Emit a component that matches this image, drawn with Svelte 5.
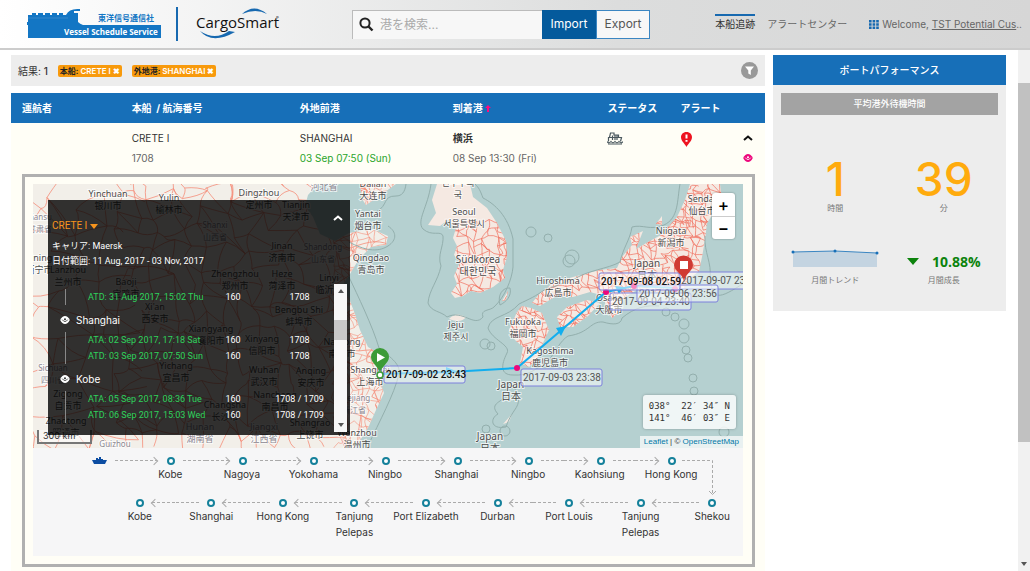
<script lang="ts">
  type PortCall = { port: string; events: { text: string; service: string; voyage: string }[] };
  type Label = { x: number; y: number; lines: string[]; size?: number; soft?: boolean };

  let query = $state("");
  let mode = $state("Import");

  const filters = [
    { key: "本船:", value: "CRETE I" },
    { key: "外地港:", value: "SHANGHAI" },
  ];

  const calls: PortCall[] = [
    { port: "", events: [{ text: "ATD: 31 Aug 2017, 15:02 Thu", service: "160", voyage: "1708" }] },
    {
      port: "Shanghai",
      events: [
        { text: "ATA: 02 Sep 2017, 17:18 Sat", service: "160", voyage: "1708" },
        { text: "ATD: 03 Sep 2017, 07:50 Sun", service: "160", voyage: "1708" },
      ],
    },
    {
      port: "Kobe",
      events: [
        { text: "ATA: 05 Sep 2017, 08:36 Tue", service: "160", voyage: "1708 / 1709" },
        { text: "ATD: 06 Sep 2017, 15:03 Wed", service: "160", voyage: "1708 / 1709" },
      ],
    },
  ];

  const outbound = ["", "Kobe", "Nagoya", "Yokohama", "Ningbo", "Shanghai", "Ningbo", "Kaohsiung", "Hong Kong"];
  const inbound = ["Kobe", "Shanghai", "Hong Kong", "Tanjung Pelepas", "Port Elizabeth", "Durban", "Port Louis", "Tanjung Pelepas", "Shekou"];

  const china =
    "M33 184H318L308 195 305 206 313 217 320 234 335 241 349 233 360 231 372 229 388 236 386 245 371 247 359 259 350 274 342 286 350 301 355 314 360 330 368 347 378 353 384 368 381 384 384 393 376 410 368 428 355 448H33ZM360 184H396L378 197 366 205 362 199Z";
  const islands = [
    "M437 184 432 200 436 213 428 225 440 226 448 220 456 228 453 238 457 246 454 255 460 262 454 276 457 284 451 293 455 298 463 296 471 291 480 293 493 287 505 278 503 270 507 257 506 241 497 223 487 208 473 197 470 184Z",
    "M449 319Q456 311 466 317Q461 324 449 319Z",
    "M517 312 522 306 531 308 542 313 549 330 543 343 538 358 529 367 520 363 523 347 515 340 509 330Z",
    "M532 303 540 293 553 283 573 277 600 270 617 268 622 257 632 245 630 237 643 231 636 249 648 242 661 235 677 217 685 200 690 184H720L722 200 707 223 705 240 702 257 699 271 688 280 684 289 676 285 660 292 637 290 625 297 618 313 612 318 606 309 604 296 590 292 573 297 556 296 540 306Z",
    "M557 317 567 307 587 300 600 303 588 316 573 327 560 327Z",
    "M656 224 662 216 662 225Z",
    "M502 301 508 291 506 300Z",
    "M503 424 512 414 509 422Z",
    "M376 392 381 391 379 396Z",
  ].join("");

  const seaLines = [
    "M406 184C405 192 402 196 396 196C382 196 389 205 376 212M349 242C364 250 377 253 388 246C397 240 397 232 388 226",
    "M349 277C357 294 373 327 379 348C396 361 400 366 399 374C394 395 380 420 367 448",
    "M431 184C428 207 416 221 423 229C432 237 441 230 443 236C444 246 437 255 441 266C438 281 429 290 428 303C431 312 441 311 447 317C463 309 474 328 483 317C480 309 490 311 494 307C505 297 512 279 513 267V239C508 216 495 204 483 198C480 190 479 188 475 184",
    "M500 305C497 295 503 287 510 288C512 296 506 302 500 305Z",
    "M744 283C718 300 713 300 710 279C712 262 704 253 705 236",
    "M680 184C677 200 679 218 664 225C650 231 643 224 632 227C630 240 623 248 620 262C608 269 587 270 573 280C562 282 557 287 547 288C535 297 529 299 519 304C507 318 491 315 488 328C492 340 511 345 507 353C501 365 500 375 513 375C528 376 535 370 548 361C557 350 560 341 568 336C590 333 590 321 603 322C613 325 621 325 622 318C635 307 647 305 659 306",
    "M498 414C488 403 503 402 508 394C500 377 513 384 516 391C523 408 513 406 506 427C490 430 490 418 498 414Z",
  ];
  const rings = [
    [531, 232, 5], [548, 238, 4], [569, 261, 6], [572, 257, 7], [485, 344, 5], [491, 346, 4],
    [684, 324, 5], [684, 338, 5], [686, 350, 4], [688, 358, 4], [693, 378, 4], [694, 391, 4],
    [724, 432, 5], [486, 429, 4], [505, 431, 5], [666, 312, 4], [675, 317, 4],
  ];

  const labels: Label[] = [
    { x: 108, y: 197, lines: ["Yinchuan", "银川市"] },
    { x: 169, y: 201, lines: ["Yulin", "榆林市"] },
    { x: 259, y: 196, lines: ["Dingzhou", "定州市"] },
    { x: 296, y: 208, lines: ["Tianjin", "天津市"] },
    { x: 324, y: 190, lines: ["河北省"], soft: true },
    { x: 40, y: 220, lines: ["Gansu", "甘肃省"], size: 8, soft: true },
    { x: 39, y: 261, lines: ["Xining", "西宁市"] },
    { x: 68, y: 273, lines: ["Lanzhou", "兰州市"] },
    { x: 215, y: 228, lines: ["Shanxi", "山西省"], size: 8, soft: true },
    { x: 282, y: 249, lines: ["Jinan", "济南市"] },
    { x: 323, y: 250, lines: ["Shandong", "山东省"], size: 8, soft: true },
    { x: 126, y: 285, lines: ["Baoji", "宝鸡市"] },
    { x: 235, y: 277, lines: ["Zhengzhou", "郑州市"] },
    { x: 282, y: 277, lines: ["Heze", "菏泽市"] },
    { x: 329, y: 281, lines: ["Linyi", "临沂市"] },
    { x: 155, y: 310, lines: ["Xi'an", "西安市"] },
    { x: 299, y: 313, lines: ["Bengbu Shi", "蚌埠市"] },
    { x: 211, y: 332, lines: ["Xiangyang", "襄阳市"] },
    { x: 262, y: 342, lines: ["Xinyang", "信阳市"] },
    { x: 342, y: 345, lines: ["Nantong", "南通市"] },
    { x: 176, y: 369, lines: ["Yichang", "宜昌市"] },
    { x: 264, y: 373, lines: ["Wuhan", "武汉市"] },
    { x: 311, y: 374, lines: ["Anqing", "安庆市"] },
    { x: 53, y: 371, lines: ["Sichuan", "四川省"], size: 8, soft: true },
    { x: 68, y: 397, lines: ["Zigong", "自贡市"] },
    { x: 225, y: 408, lines: ["Changsha", "长沙市"] },
    { x: 275, y: 398, lines: ["Nanchang", "南昌市"] },
    { x: 66, y: 424, lines: ["Zhaotong", "昭通市"] },
    { x: 310, y: 426, lines: ["Shangrao", "上饶市"] },
    { x: 200, y: 430, lines: ["Hunan", "湖南省"], soft: true },
    { x: 264, y: 430, lines: ["Jiangxi", "江西省"], soft: true },
    { x: 115, y: 447, lines: ["Guizhou"], size: 8, soft: true },
    { x: 373, y: 187, lines: ["Dalian", "大连市"] },
    { x: 368, y: 217, lines: ["Yantai", "烟台市"] },
    { x: 371, y: 261, lines: ["Qingdao", "青岛市"] },
    { x: 458, y: 186, lines: ["민주주의", "국"] },
    { x: 464, y: 215, lines: ["Seoul", "서울특별시"] },
    { x: 478, y: 263, lines: ["Südkorea", "대한민국"], size: 10 },
    { x: 456, y: 328, lines: ["Jeju", "제주시"] },
    { x: 558, y: 284, lines: ["Hiroshima", "広島市"] },
    { x: 523, y: 325, lines: ["Fukuoka", "福岡市"] },
    { x: 550, y: 354, lines: ["Kagoshima", "鹿児島市"] },
    { x: 511, y: 388, lines: ["Japan", "日本"], size: 10 },
    { x: 490, y: 440, lines: ["Japan", "日本"], size: 10 },
    { x: 370, y: 373, lines: ["Shanghai", "上海市"] },
    { x: 354, y: 401, lines: ["Zhejiang", "浙江省"], size: 8, soft: true },
    { x: 357, y: 436, lines: ["Wenzhou", "温州市"] },
    { x: 671, y: 234, lines: ["Niigata", "新潟市"] },
    { x: 702, y: 202, lines: ["Sendai", "仙台市"] },
    { x: 647, y: 267, lines: ["Japan", "日本"], size: 10 },
    { x: 609, y: 301, lines: ["Osaka", "大阪市"] },
  ];

  const stamps = [
    { x: 521, y: 369, text: "2017-09-03 23:38" },
    { x: 610, y: 293, text: "2017-09-04 23:40" },
    { x: 679, y: 272, text: "2017-09-07 23:51" },
    { x: 637, y: 285, text: "2017-09-06 23:56" },
    { x: 599, y: 273, text: "2017-09-08 02:59", strong: true },
    { x: 384, y: 366, text: "2017-09-02 23:43", strong: true },
  ];

  // road mesh: jittered grid joined to its right and lower neighbours
  function mesh(x0: number, y0: number, x1: number, y1: number, step: number, seed: number) {
    let s = seed;
    const rnd = () => (s = (s * 16807) % 2147483647) / 2147483647;
    const cols = Math.ceil((x1 - x0) / step) + 1;
    const rows = Math.ceil((y1 - y0) / step) + 1;
    const pts = Array.from({ length: rows }, (_, r) =>
      Array.from({ length: cols }, (_, c) => [x0 + (c + rnd() - 0.5) * step, y0 + (r + rnd() - 0.5) * step])
    );
    let d = "";
    const join = (a: number[], b: number[]) => {
      const mx = (a[0] + b[0]) / 2 + (rnd() - 0.5) * step * 0.5;
      const my = (a[1] + b[1]) / 2 + (rnd() - 0.5) * step * 0.5;
      d += `M${a[0].toFixed(1)} ${a[1].toFixed(1)}Q${mx.toFixed(1)} ${my.toFixed(1)} ${b[0].toFixed(1)} ${b[1].toFixed(1)}`;
    };
    for (let r = 0; r < rows - 1; r++) {
      for (let c = 0; c < cols - 1; c++) {
        if (rnd() < 0.8) join(pts[r][c], pts[r][c + 1]);
        if (rnd() < 0.8) join(pts[r][c], pts[r + 1][c]);
        if (rnd() < 0.3) join(pts[r][c], pts[r + 1][c + 1]);
      }
    }
    return d;
  }
  const mainRoads = mesh(120, 180, 400, 450, 17, 77) + mesh(30, 180, 130, 450, 26, 5);
  const coastRoads = mesh(335, 184, 400, 450, 8, 31);
  const koreaRoads = mesh(450, 222, 515, 300, 8, 911);
  const japanRoads = mesh(500, 222, 730, 370, 6, 57) + mesh(670, 184, 730, 222, 6, 19);
</script>

{#snippet eye()}
  <svg class="eye" viewBox="0 0 12 10" aria-hidden="true">
    <path d="M0 5C3-1.500 9-1.500 12 5C9 11.500 3 11.500 0 5Z" fill="currentColor" />
    <path d="M2.500 4.500Q6 9.500 9.500 4.500" fill="none" stroke="var(--pupil)" />
    <circle cx="6" cy="4" r="1.300" fill="var(--pupil)" />
  </svg>
{/snippet}

<header class="topbar">
  <a class="brand" href="#home" aria-label="Vessel Schedule Service">
    <svg width="134" height="32" viewBox="0 0 134 32">
      <path d="M1 14V7H5V5H9V7H11V5H16V7H18V5H23V7H25V5H30V7H32V5H36V7H39Q42 0 53 1V3H47V5H51V14Q53 16 56 17H134V30H1V17H0V14Z" fill="#1376c4" />
      <path d="M1 10H41" stroke="#559bd1" stroke-width=".5" />
      <text class="jp-logo" x="71" y="13">東洋信号通信社</text>
      <text class="en-logo" x="37" y="27">Vessel Schedule Service</text>
    </svg>
  </a>
  <a class="brand cargo" href="#cargosmart" aria-label="CargoSmart">
    <svg width="84" height="34" viewBox="0 0 84 34">
      <path d="M46 7Q58-4 71 7Q60 1 46 7Z" fill="#1769b0" />
      <path d="M4 24Q16 38 39 25L33 24Q19 34 4 24Z" fill="#1769b0" />
      <text class="cs-logo" x="0" y="21">CargoSmart</text>
      <text x="80" y="12" font-size="4">®</text>
    </svg>
  </a>

  <form class="search" onsubmit={(e) => e.preventDefault()}>
    <label for="port">
      <svg width="15" height="15" viewBox="0 0 15 15" aria-label="Search">
        <circle cx="6" cy="6" r="4.6" fill="none" stroke="#222" stroke-width="2" />
        <path d="M9.5 9.5 13.5 13.5" stroke="#222" stroke-width="2.4" />
      </svg>
    </label>
    <input id="port" type="text" placeholder="港を検索..." bind:value={query} />
    {#each ["Import", "Export"] as m}
      <button type="button" class:active={mode === m} onclick={() => (mode = m)}>{m}</button>
    {/each}
  </form>

  <nav>
    <a class="current" href="#tracking">本船追跡</a>
    <a href="#alerts">アラートセンター</a>
    <span class="user">
      <svg width="10" height="9" viewBox="0 0 10 9" aria-hidden="true">
        <path d="M0 1.2H10M0 4.5H10M0 7.8H10" stroke="#1769b0" stroke-width="2.4" stroke-dasharray="2.6 1" />
      </svg>
      <span class="name">Welcome, <a href="#account">TST Potential Cus</a>..</span>
    </span>
  </nav>
</header>

<main>
  <section class="results">
    <div class="summary">
      <span class="count">結果: <b>1</b></span>
      {#each filters as f}
        <button class="tag"><i>{f.key}</i> {f.value} <span>✖</span></button>
      {/each}
      <button class="funnel" aria-label="Filter">
        <svg width="17" height="17" viewBox="0 0 17 17">
          <circle cx="8.5" cy="8.5" r="8.5" fill="#999" />
          <path d="M4 4.5H13L9.8 8.5V13L7.3 11.5V8.5Z" fill="#fff" />
        </svg>
      </button>
    </div>

    <table>
      <thead>
        <tr>
          <th>運航者</th>
          <th>本船 &nbsp;/ 航海番号</th>
          <th>外地前港</th>
          <th>到着港 <svg width="6" height="7" viewBox="0 0 6 7" aria-hidden="true"><path d="M3 0 6 3H4V7H2V3H0Z" fill="#ff0a80" /></svg></th>
          <th>ステータス</th>
          <th>アラート</th>
          <th></th>
        </tr>
      </thead>
      <tbody>
        <tr class="vessel">
          <td></td>
          <td><div>CRETE I</div><div class="sub">1708</div></td>
          <td><div>SHANGHAI</div><div class="sub early">03 Sep 07:50 (Sun)</div></td>
          <td><div><b>横浜</b></div><div class="sub">08 Sep 13:30 (Fri)</div></td>
          <td>
            <svg class="status" width="16" height="13" viewBox="0 0 16 13" aria-label="At sea">
              <path d="M1.500 9.500V5.500H2.500L3.500 1H7V3H11.500V5.500H14.500L13.500 9.500M3 5.500H12M5.500 3.500V8M8 3.500V8M10 3.500V8" fill="none" stroke="#4b585e" stroke-width="1.2" />
              <path d="M0 9.500Q2 12 4 9.500Q6 12 8 9.500Q10 12 12 9.500Q14 12 16 9.500M1 12H15" fill="none" stroke="#4b585e" stroke-width="1.2" />
            </svg>
          </td>
          <td>
            <svg class="alert" width="11" height="15" viewBox="0 0 11 15" aria-label="Alert">
              <path d="M5.500 0C9 0 11 2.500 11 5.300C11 9 7 12 5.500 15C4 12 0 9 0 5.300C0 2.500 2 0 5.500 0Z" fill="#ee1320" />
              <path d="M5.500 2.500V6.500M5.500 8V9.800" stroke="#fff" stroke-width="2" />
            </svg>
          </td>
          <td class="tools">
            <button aria-label="Collapse"><svg width="10" height="6" viewBox="0 0 10 6"><path d="M1 5 5 1.500 9 5" fill="none" stroke="#111" stroke-width="2" /></svg></button>
            <button class="watch" aria-label="Watch">{@render eye()}</button>
          </td>
        </tr>
        <tr>
          <td class="detail" colspan="7">
            <div class="frame">
              <div class="map">
                <svg class="chart" viewBox="33 184 710 264" aria-label="Map">
                  <defs>
                    <clipPath id="mainland"><path d={china} /></clipPath>
                    <clipPath id="isles"><path d={islands} /></clipPath>
                  </defs>
                  <rect x="33" y="184" width="710" height="264" fill="#b5d0d0" />
                  <path d={china} fill="#f2efe9" />
                  <path d={islands} fill="#f5e9e2" />
                  <g clip-path="url(#mainland)" fill="none" stroke="#f58d78">
                    <path d={mainRoads} stroke-width=".8" />
                    <path d={coastRoads} stroke-width=".6" />
                  </g>
                  <g clip-path="url(#isles)" fill="none" stroke="#f0705f">
                    <path d={koreaRoads} stroke-width=".7" />
                    <path d={japanRoads} stroke-width=".7" />
                  </g>
                  <g fill="none" stroke="#93afad">
                    {#each seaLines as d}<path {d} />{/each}
                    {#each rings as [cx, cy, r]}<circle {cx} {cy} {r} />{/each}
                  </g>
                  {#each labels as l}
                    <text class="place" class:soft={l.soft} font-size={l.size ?? 9}>
                      {#each l.lines as line, i}
                        <tspan x={l.x} y={l.y + i * 12}>{line}</tspan>
                      {/each}
                    </text>
                  {/each}
                  <g stroke="#12aeee" stroke-width="2" fill="none">
                    <path d="M380 374 450 372 517 368 606 292 634 286 677 288" />
                  </g>
                  <g fill="#12aeee">
                    <path d="M446 367 456 371 446 376Z" />
                    <path d="M556 328 566 326 561 336Z" />
                    <path d="M615 286 624 287 619 294Z" />
                  </g>
                  <g fill="#ed087c">
                    <circle cx="517" cy="368" r="3" />
                    <circle cx="606" cy="292" r="3" />
                    <circle cx="634" cy="286" r="3" />
                    <circle cx="675" cy="289" r="3" />
                  </g>
                  {#each stamps as s}
                    <g class="stamp" class:strong={s.strong}>
                      <rect x={s.x} y={s.y} width="81" height="17" rx="2" />
                      <text x={s.x + 2} y={s.y + 12}>{s.text}</text>
                    </g>
                  {/each}
                  <path d="M380 373C379 367 371 363 371 357A9 9 0 0 1 389 357C389 363 381 367 380 373Z" fill="#3c9b38" />
                  <path d="M377 353V362L385 357.500Z" fill="#fff" />
                  <circle cx="380" cy="375" r="3" fill="#fff" stroke="#3c9b38" stroke-width="1.5" />
                  <path d="M684 281C683 274 674 271 674 265A9.500 9.500 0 0 1 693 265C693 271 685 274 684 281Z" fill="#d03a33" />
                  <rect x="680" y="261" width="8" height="8" fill="#fff" />
                </svg>

                <div class="scale">300 km</div>

                <div class="voyage">
                  <button class="fold" aria-label="Close"><svg width="10" height="6" viewBox="0 0 10 6"><path d="M1 5 5 1.500 9 5" fill="none" stroke="#fff" stroke-width="2" /></svg></button>
                  <button class="ship-name">CRETE I <span class="caret"></span></button>
                  <p>キャリア: Maersk</p>
                  <p>日付範囲: 11 Aug, 2017 - 03 Nov, 2017</p>
                  <div class="log">
                    <ul>
                      {#each calls as c}
                        <li>
                          {#if c.port}<h4>{@render eye()}{c.port}</h4>{/if}
                          <div class="events">
                            {#each c.events as e}
                              <div class="event"><em>{e.text}</em><span>{e.service}</span><span>{e.voyage}</span></div>
                            {/each}
                          </div>
                        </li>
                      {/each}
                    </ul>
                    <div class="bar"><span class="up"></span><span class="grip"></span><span class="down"></span></div>
                  </div>
                </div>

                <div class="zoom">
                  <button aria-label="Zoom in">+</button>
                  <button aria-label="Zoom out">−</button>
                </div>
                <pre class="coords">038°  22′ 34″ N
141°  46′ 03″ E</pre>
                <div class="credit"><a href="#leaflet">Leaflet</a> | © <a href="#osm">OpenStreetMap</a></div>
              </div>

              <div class="route">
                <ol class="out">
                  {#each outbound as port, i}
                    <li>
                      <div class="step">
                        <span class="dash before" class:blank={i === 0}></span>
                        {#if port}
                          <span class="dot"></span>
                        {:else}
                          <svg class="boat" width="15" height="7" viewBox="0 0 15 7" aria-label="Vessel"><path d="M0 3H4V1H6V2H7V0H9V2H11V3H15L13 7H2Z" fill="#0c4da2" /></svg>
                        {/if}
                        <span class="dash after" class:blank={i === outbound.length - 1}></span>
                      </div>
                      {port}
                      {#if i === outbound.length - 1}
                        <svg class="turn" width="38" height="36" viewBox="0 0 38 36" aria-hidden="true">
                          <path d="M0 .5H30.500V34" fill="none" stroke="#aaa" stroke-dasharray="3 2" />
                          <path d="M27 31 30.500 34.500 34 31" fill="none" stroke="#aaa" />
                        </svg>
                      {/if}
                    </li>
                  {/each}
                </ol>
                <ol class="back">
                  {#each inbound as port, i}
                    <li>
                      <div class="step">
                        <span class="dash before" class:blank={i === 0}></span>
                        <span class="dot"></span>
                        <span class="dash after" class:blank={i === inbound.length - 1}></span>
                      </div>
                      {port}
                    </li>
                  {/each}
                </ol>
              </div>
            </div>
          </td>
        </tr>
      </tbody>
    </table>
  </section>

  <aside>
    <h2>ポートパフォーマンス</h2>
    <h3>平均港外待機時間</h3>
    <div class="stats">
      <div><strong>1</strong><small>時間</small></div>
      <div><strong>39</strong><small>分</small></div>
    </div>
    <div class="stats trend">
      <div>
        <svg width="88" height="22" viewBox="0 0 88 22" aria-hidden="true">
          <path d="M2 4 44 3 86 5V19H2Z" fill="#c4d4e1" />
          <path d="M2 4 44 3 86 5" fill="none" stroke="#3b86c2" />
          <g fill="#176fb8"><circle cx="2" cy="4" r="1.500" /><circle cx="44" cy="3" r="1.500" /><circle cx="86" cy="5" r="1.500" /></g>
        </svg>
        <small>月間トレンド</small>
      </div>
      <div>
        <span class="growth"><span class="fall"></span>10.88%</span>
        <small>月間成長</small>
      </div>
    </div>
  </aside>
</main>
<div class="page-bar"><span class="thumb"></span><span class="down"></span></div>

<style>
  :global(body) {
    background: #fff;
    color: #333;
    font: 10px/16px Inter, "Noto Sans CJK JP", sans-serif;
  }
  * {
    box-sizing: border-box;
  }
  button {
    font: inherit;
    color: inherit;
    border: 0;
    padding: 0;
    background: none;
    cursor: pointer;
  }
  a {
    color: inherit;
    text-decoration: none;
  }
  svg {
    display: block;
  }

  .topbar {
    display: flex;
    align-items: center;
    height: 50px;
    padding: 0 8px 0 27px;
    border-bottom: 2px solid #ccc;
    background: linear-gradient(90deg, #fff, #dcdddd 60%, #d6d6d6);
  }
  .cargo {
    margin-left: 15px;
    padding-left: 18px;
    border-left: 2px solid #1769b0;
    flex: none;
  }
  .jp-logo {
    font: bold 8px "Noto Sans CJK JP", sans-serif;
    fill: #1376c4;
  }
  .en-logo {
    font: bold 8px "Open Sans", sans-serif;
    fill: #fff;
  }
  .cs-logo {
    font: 15px "Open Sans", sans-serif;
    fill: #111;
  }
  .search {
    display: flex;
    align-items: stretch;
    width: 298px;
    height: 29px;
    margin-left: 72px;
  }
  .search label {
    display: flex;
    align-items: center;
    padding: 0 6px;
    background: #f7f7f7;
    border-top: 1px solid #bbb;
    border-left: 1px solid #bbb;
  }
  .search input {
    flex: 1;
    min-width: 0;
    padding: 0;
    border: 0;
    border-top: 1px solid #bbb;
    background: #f7f7f7;
    font: 12px Inter, "Noto Sans CJK JP", sans-serif;
  }
  .search input::placeholder {
    color: #aaa;
  }
  .search button {
    width: 54px;
    font-size: 12px;
    color: #555;
    background: #f7f7f7;
    border: 1px solid #3b86c2;
  }
  .search button.active {
    background: #045a9c;
    border-color: #045a9c;
    color: #fff;
  }
  nav {
    display: flex;
    align-items: center;
    gap: 12px;
    margin-left: auto;
    color: #666;
    white-space: nowrap;
  }
  nav .current {
    color: #333;
    border-top: 2px solid #1769b0;
    padding-bottom: 2px;
  }
  .user {
    display: flex;
    align-items: center;
    gap: 3px;
    margin-left: 10px;
  }
  .name a {
    text-decoration: underline;
  }

  main {
    display: flex;
    align-items: flex-start;
    gap: 8px;
    padding: 5px 24px 0 11px;
  }
  .results {
    flex: 1;
    min-width: 0;
  }
  .summary {
    display: flex;
    align-items: center;
    gap: 10px;
    height: 31px;
    margin-bottom: 7px;
    padding: 0 7px;
    background: #ededed;
  }
  .summary b {
    font-weight: 500;
  }
  .tag {
    height: 12px;
    padding: 0 2px;
    border-radius: 2px;
    background: #f89a0c;
    color: #fff;
    font: 600 8px/12px Inter, "Noto Sans CJK JP", sans-serif;
  }
  .tag i {
    color: #222;
    font-style: normal;
  }
  .funnel {
    margin-left: auto;
  }

  table {
    width: 100%;
    table-layout: fixed;
    border-collapse: collapse;
    background: #fffef6;
  }
  th {
    height: 30px;
    padding: 0;
    background: #176fb8;
    color: #fff;
    font-weight: 700;
    text-align: left;
    white-space: nowrap;
  }
  th:first-child {
    width: 16%;
    padding-left: 11px;
  }
  th:nth-child(2) {
    width: 22.300%;
  }
  th:nth-child(3) {
    width: 20.300%;
  }
  th:nth-child(4) {
    width: 20.500%;
  }
  th:nth-child(5) {
    width: 9.700%;
  }
  th:nth-child(6) {
    width: 8.300%;
  }
  th svg {
    display: inline-block;
  }
  td {
    padding: 5px 0 0;
    line-height: 20px;
    vertical-align: top;
  }
  td b {
    font-weight: 600;
  }
  .sub {
    color: #666;
  }
  .early {
    color: #2ba52b;
  }
  .status,
  .alert {
    margin-top: 4px;
  }
  .tools button {
    display: flex;
    align-items: center;
    width: 12px;
    height: 20px;
  }
  .eye {
    width: 10px;
    height: 8px;
    flex: none;
    --pupil: #333;
  }
  .watch {
    color: #ed087c;
  }
  .watch .eye {
    --pupil: #fff;
  }
  .detail {
    padding: 6px 10px 5px 11px;
    line-height: 16px;
  }
  .frame {
    padding: 7px 9px 8px 8px;
    border: 3px solid #b0b0b0;
  }

  .map {
    position: relative;
    overflow: hidden;
  }
  .chart {
    width: 100%;
    height: auto;
  }
  .place {
    font-family: "Noto Sans", "Noto Sans CJK SC", "Noto Sans CJK KR", sans-serif;
    text-anchor: middle;
    fill: #4c4c4c;
    stroke: #ffffffb3;
    stroke-width: 2px;
    paint-order: stroke;
  }
  .soft {
    fill: #8b8791;
  }
  .stamp rect {
    fill: #ffffff80;
    stroke: #7c80dc;
    stroke-width: 1px;
  }
  .stamp text {
    font: 10px Roboto, sans-serif;
    fill: #555;
  }
  .stamp.strong text {
    fill: #111;
    font-weight: 500;
  }
  .scale {
    position: absolute;
    left: 4px;
    bottom: 4px;
    width: 55px;
    height: 14px;
    padding-left: 4px;
    border: 2px solid #777;
    border-top: 0;
    background: #ffffff80;
    font-size: 9px;
    line-height: 12px;
  }
  .voyage {
    position: absolute;
    top: 16px;
    left: 15px;
    width: 302px;
    height: 235px;
    padding: 18px 3px 0 4px;
    background: #000000cc;
    color: #fff;
    font: 9px/16px Roboto, "Noto Sans CJK JP", sans-serif;
  }
  .fold {
    position: absolute;
    top: 15px;
    right: 7px;
  }
  .ship-name {
    display: block;
    margin-bottom: 5px;
    color: #f7941d;
    font-size: 10px;
  }
  .caret,
  .fall {
    display: inline-block;
    border: 4px solid transparent;
    border-top: 5px solid currentColor;
    border-bottom: 0;
  }
  .voyage p {
    margin: 0;
    line-height: 15px;
  }
  .log {
    display: flex;
    margin-top: 15px;
  }
  .log ul {
    flex: 1;
    margin: 5px 0 0;
    padding: 0;
    list-style: none;
  }
  h4 {
    display: flex;
    align-items: center;
    gap: 6px;
    margin: 0;
    padding: 7px 0 4px 8px;
    font: 10px/16px Inter, sans-serif;
  }
  .events {
    margin-left: 13px;
    padding-left: 22px;
    border-left: 1px solid #888;
  }
  .event {
    display: grid;
    grid-template-columns: 127px 36px 1fr;
    white-space: nowrap;
    text-align: center;
  }
  .event em {
    color: #2fd35b;
    font-style: normal;
    text-align: left;
  }
  .event span:last-child {
    padding-left: 14px;
  }
  .bar {
    display: flex;
    flex-direction: column;
    justify-content: space-between;
    align-items: center;
    width: 13px;
    height: 148px;
    padding: 5px 0;
    background: #f7f7f7;
  }
  .grip {
    width: 13px;
    height: 20px;
    margin-bottom: 56px;
    background: #c8c8c8;
  }
  .up,
  .down {
    border: 3px solid transparent;
    border-top: 4px solid #555;
    border-bottom: 0;
  }
  .up {
    border-top: 0;
    border-bottom: 4px solid #555;
  }
  .zoom {
    position: absolute;
    top: 9px;
    right: 8px;
    border-radius: 3px;
    background: #fff;
    box-shadow: 0 0 2px #0006;
  }
  .zoom button {
    display: block;
    width: 23px;
    height: 23px;
    color: #000;
    font-size: 17px;
    font-weight: 500;
  }
  .zoom button + button {
    border-top: 1px solid #ccc;
  }
  .coords {
    position: absolute;
    right: 7px;
    bottom: 19px;
    margin: 0;
    padding: 5px 6px;
    border-radius: 3px;
    background: #ffffffcc;
    box-shadow: 0 0 3px #0004;
    font: 9px/12px "DejaVu Sans Mono", monospace;
  }
  .credit {
    position: absolute;
    right: 0;
    bottom: 0;
    padding: 0 4px;
    background: #ffffffb3;
    font: 8px/12px "Liberation Sans", sans-serif;
  }
  .credit a {
    color: #0078a8;
  }

  .route {
    height: 108px;
    padding-top: 7px;
    background: #f6f6f7;
  }
  ol {
    display: grid;
    grid-template-columns: repeat(9, 1fr);
    width: 90.700%;
    height: 42px;
    margin: 0 0 0 30px;
    padding: 0;
    list-style: none;
    text-align: center;
  }
  ol.back {
    margin-left: 71px;
  }
  .route li {
    position: relative;
  }
  .step {
    display: flex;
    align-items: center;
    height: 11px;
  }
  .dot {
    width: 8px;
    height: 8px;
    border: 2px solid #15819b;
    border-radius: 50%;
    background: #fff;
  }
  .dash {
    flex: 1;
    height: 1px;
    background: repeating-linear-gradient(90deg, #aaa 0 3px, transparent 3px 5px);
  }
  .out .before {
    margin-right: 10px;
  }
  .out .after,
  .back .after {
    margin-left: 8px;
  }
  .back .before {
    margin-right: 8px;
  }
  .out .before::after,
  .back .after::before {
    content: "";
    display: block;
    width: 5px;
    height: 5px;
    margin: -2px 0 0 auto;
    border: solid #aaa;
    border-width: 1px 1px 0 0;
    transform: rotate(45deg);
  }
  .back .after::before {
    margin-left: 0;
    transform: rotate(225deg);
  }
  .blank {
    visibility: hidden;
  }
  .turn {
    position: absolute;
    top: 5px;
    left: calc(50% + 11px);
  }

  aside {
    width: 233px;
    height: 256px;
    background: #ededed;
    text-align: center;
  }
  h2,
  h3 {
    margin: 0;
    color: #fff;
    font-size: 10px;
    font-weight: 500;
  }
  h2 {
    background: #176fb8;
    line-height: 30px;
  }
  h3 {
    margin: 8px 8px 0;
    background: #a3a3a3;
    font-size: 9px;
    line-height: 22px;
  }
  .stats {
    display: grid;
    grid-template-columns: 1fr 1fr;
    margin: 41px 8px 0;
  }
  .stats strong {
    display: block;
    color: #ffab0d;
    font-size: 46px;
    font-weight: 500;
    line-height: 46px;
  }
  small {
    display: block;
    color: #777;
    font-size: 8px;
    line-height: 12px;
  }
  .trend {
    margin-top: 34px;
  }
  .trend svg {
    margin: 0 auto 4px;
  }
  .growth {
    display: flex;
    align-items: center;
    justify-content: center;
    gap: 13px;
    height: 26px;
    color: #0c830c;
    font: bold 14px "Open Sans", sans-serif;
  }
  .fall {
    border-width: 7px 6px 0;
  }
  .page-bar {
    position: absolute;
    top: 50px;
    right: 0;
    bottom: 0;
    width: 12px;
    background: #f1f1f1;
  }
  .thumb {
    display: block;
    height: 69%;
    margin-top: 33px;
    background: #c1c1c1;
  }
  .page-bar .down {
    position: absolute;
    right: 3px;
    bottom: 5px;
  }
</style>
